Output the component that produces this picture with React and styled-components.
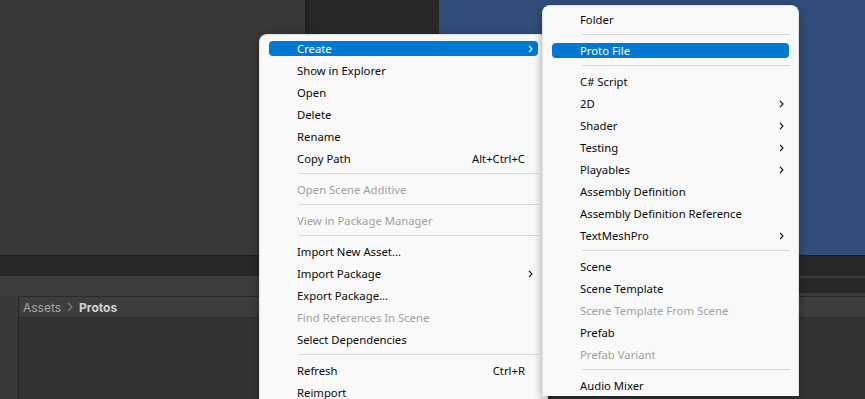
import React from 'react';
import styled, { createGlobalStyle } from 'styled-components';

const GlobalStyle = createGlobalStyle`
  html, body {
    margin: 0;
    padding: 0;
    background: #333333;
    overflow: hidden;
  }
  #root {
    width: 865px;
    height: 399px;
  }
`;

const Editor = styled.div`
  position: relative;
  width: 865px;
  height: 399px;
  overflow: hidden;
  display: flex;
  flex-direction: column;
  background: #333333;
  font-family: Inter, "Noto Sans", sans-serif;
`;

const TopArea = styled.div`
  display: flex;
  height: 255px;
  border-bottom: 1px solid #1b1b1b;
`;

const Hierarchy = styled.div`
  width: 305px;
  background: #383838;
`;

const Inspector = styled.div`
  width: 134px;
  background: #282828;
  box-shadow: inset 5px 0 5px -3px rgba(0, 0, 0, 0.35);
`;

const SceneView = styled.div`
  flex: 1;
  background: #304e79;
`;

const TabStrip = styled.div`
  height: 20px;
  background: #282828;
`;

const ToolRow = styled.div`
  display: flex;
  height: 20px;
`;

const ToolLeft = styled.div`
  flex: 1;
  background: #3c3c3c;
`;

const ToolRight = styled.div`
  width: 320px;
  box-sizing: border-box;
  background: #282828;
  border-top: 2px solid #3c3c3c;
  border-bottom: 3px solid #3a3a3a;
`;

const ProjectArea = styled.div`
  flex: 1;
  display: flex;
`;

const FolderColumn = styled.div`
  width: 18px;
  background: #383838;
  border-right: 1px solid #242424;
`;

const ProjectMain = styled.div`
  flex: 1;
  display: flex;
  flex-direction: column;
`;

const Breadcrumb = styled.div`
  height: 20px;
  display: flex;
  align-items: center;
  gap: 6px;
  padding-left: 4px;
  background: #3d3d3d;
  border-top: 1px solid #2a2a2a;
  border-bottom: 1px solid #2a2a2a;
  font-size: 12px;
`;

const Crumb = styled.span`
  color: ${p => (p.$current ? '#d4d4d4' : '#a6a6a6')};
  font-weight: ${p => (p.$current ? 700 : 400)};
`;

const CrumbArrow = styled.svg`
  width: 6px;
  height: 10px;
`;

const ProjectBody = styled.div`
  flex: 1;
  background: #333333;
`;

const Menu = styled.div`
  position: absolute;
  left: ${p => p.$left}px;
  top: ${p => p.$top}px;
  width: ${p => p.$width}px;
  box-sizing: border-box;
  padding: 2px 9px 0 9px;
  background: #f9f9f9;
  border: 1px solid #e2e2e2;
  border-bottom: none;
  border-radius: 8px 8px 0 0;
  box-shadow: 0 3px 10px rgba(0, 0, 0, 0.35);
  font-family: "Noto Sans", "Open Sans", sans-serif;
  font-size: 11.3px;
`;

const Row = styled.div`
  height: 22px;
  box-sizing: border-box;
  padding: 4px 0 3px;
`;

const Item = styled.div`
  height: 15px;
  display: flex;
  align-items: center;
  padding-left: 28px;
  border-radius: 4px;
  background: ${p => (p.$active ? '#0078d4' : 'transparent')};
  color: ${p => (p.$active ? '#ffffff' : p.$disabled ? '#a2a2a2' : '#0a0a0a')};
  white-space: nowrap;
`;

const Label = styled.span`
  flex: 1;
`;

const Shortcut = styled.span`
  margin-right: 13px;
`;

const SubArrow = styled.svg`
  width: 5px;
  height: 8px;
  margin-right: 5px;
`;

const Separator = styled.div`
  height: 9px;
  box-sizing: border-box;
  padding-top: 4px;
  margin: 0 -1px 0 30px;

  &::after {
    content: '';
    display: block;
    height: 1px;
    background: #d6d6d6;
  }
`;

const contextItems = [
  { label: 'Create', submenu: true, active: true },
  { label: 'Show in Explorer' },
  { label: 'Open' },
  { label: 'Delete' },
  { label: 'Rename' },
  { label: 'Copy Path', shortcut: 'Alt+Ctrl+C' },
  { sep: true },
  { label: 'Open Scene Additive', disabled: true },
  { sep: true },
  { label: 'View in Package Manager', disabled: true },
  { sep: true },
  { label: 'Import New Asset...' },
  { label: 'Import Package', submenu: true },
  { label: 'Export Package...' },
  { label: 'Find References In Scene', disabled: true },
  { label: 'Select Dependencies' },
  { sep: true },
  { label: 'Refresh', shortcut: 'Ctrl+R' },
  { label: 'Reimport' },
];

const createItems = [
  { label: 'Folder' },
  { sep: true },
  { label: 'Proto File', active: true },
  { sep: true },
  { label: 'C# Script' },
  { label: '2D', submenu: true },
  { label: 'Shader', submenu: true },
  { label: 'Testing', submenu: true },
  { label: 'Playables', submenu: true },
  { label: 'Assembly Definition' },
  { label: 'Assembly Definition Reference' },
  { label: 'TextMeshPro', submenu: true },
  { sep: true },
  { label: 'Scene' },
  { label: 'Scene Template' },
  { label: 'Scene Template From Scene', disabled: true },
  { label: 'Prefab' },
  { label: 'Prefab Variant', disabled: true },
  { sep: true },
  { label: 'Audio Mixer' },
];

function Chevron() {
  return (
    <SubArrow viewBox="0 0 5 8">
      <path d="M1 0.8 L4 4 L1 7.2" fill="none" stroke="currentColor" strokeWidth="1.1" />
    </SubArrow>
  );
}

function MenuList({ items, left, top, width }) {
  return (
    <Menu $left={left} $top={top} $width={width}>
      {items.map((it, i) =>
        it.sep ? (
          <Separator key={i} />
        ) : (
          <Row key={i}>
            <Item $active={it.active} $disabled={it.disabled}>
              <Label>{it.label}</Label>
              {it.shortcut && <Shortcut>{it.shortcut}</Shortcut>}
              {it.submenu && <Chevron />}
            </Item>
          </Row>
        )
      )}
    </Menu>
  );
}

export default function App() {
  return (
    <>
      <GlobalStyle />
      <Editor>
        <TopArea>
          <Hierarchy />
          <Inspector />
          <SceneView />
        </TopArea>
        <TabStrip />
        <ToolRow>
          <ToolLeft />
          <ToolRight />
        </ToolRow>
        <ProjectArea>
          <FolderColumn />
          <ProjectMain>
            <Breadcrumb>
              <Crumb>Assets</Crumb>
              <CrumbArrow viewBox="0 0 6 10">
                <path d="M1 1 L5 5 L1 9" fill="none" stroke="#7a7a7a" strokeWidth="1.4" />
              </CrumbArrow>
              <Crumb $current>Protos</Crumb>
            </Breadcrumb>
            <ProjectBody />
          </ProjectMain>
        </ProjectArea>

        <MenuList items={contextItems} left={259} top={34} width={289} />
        <MenuList items={createItems} left={542} top={5} width={257} />
      </Editor>
    </>
  );
}
